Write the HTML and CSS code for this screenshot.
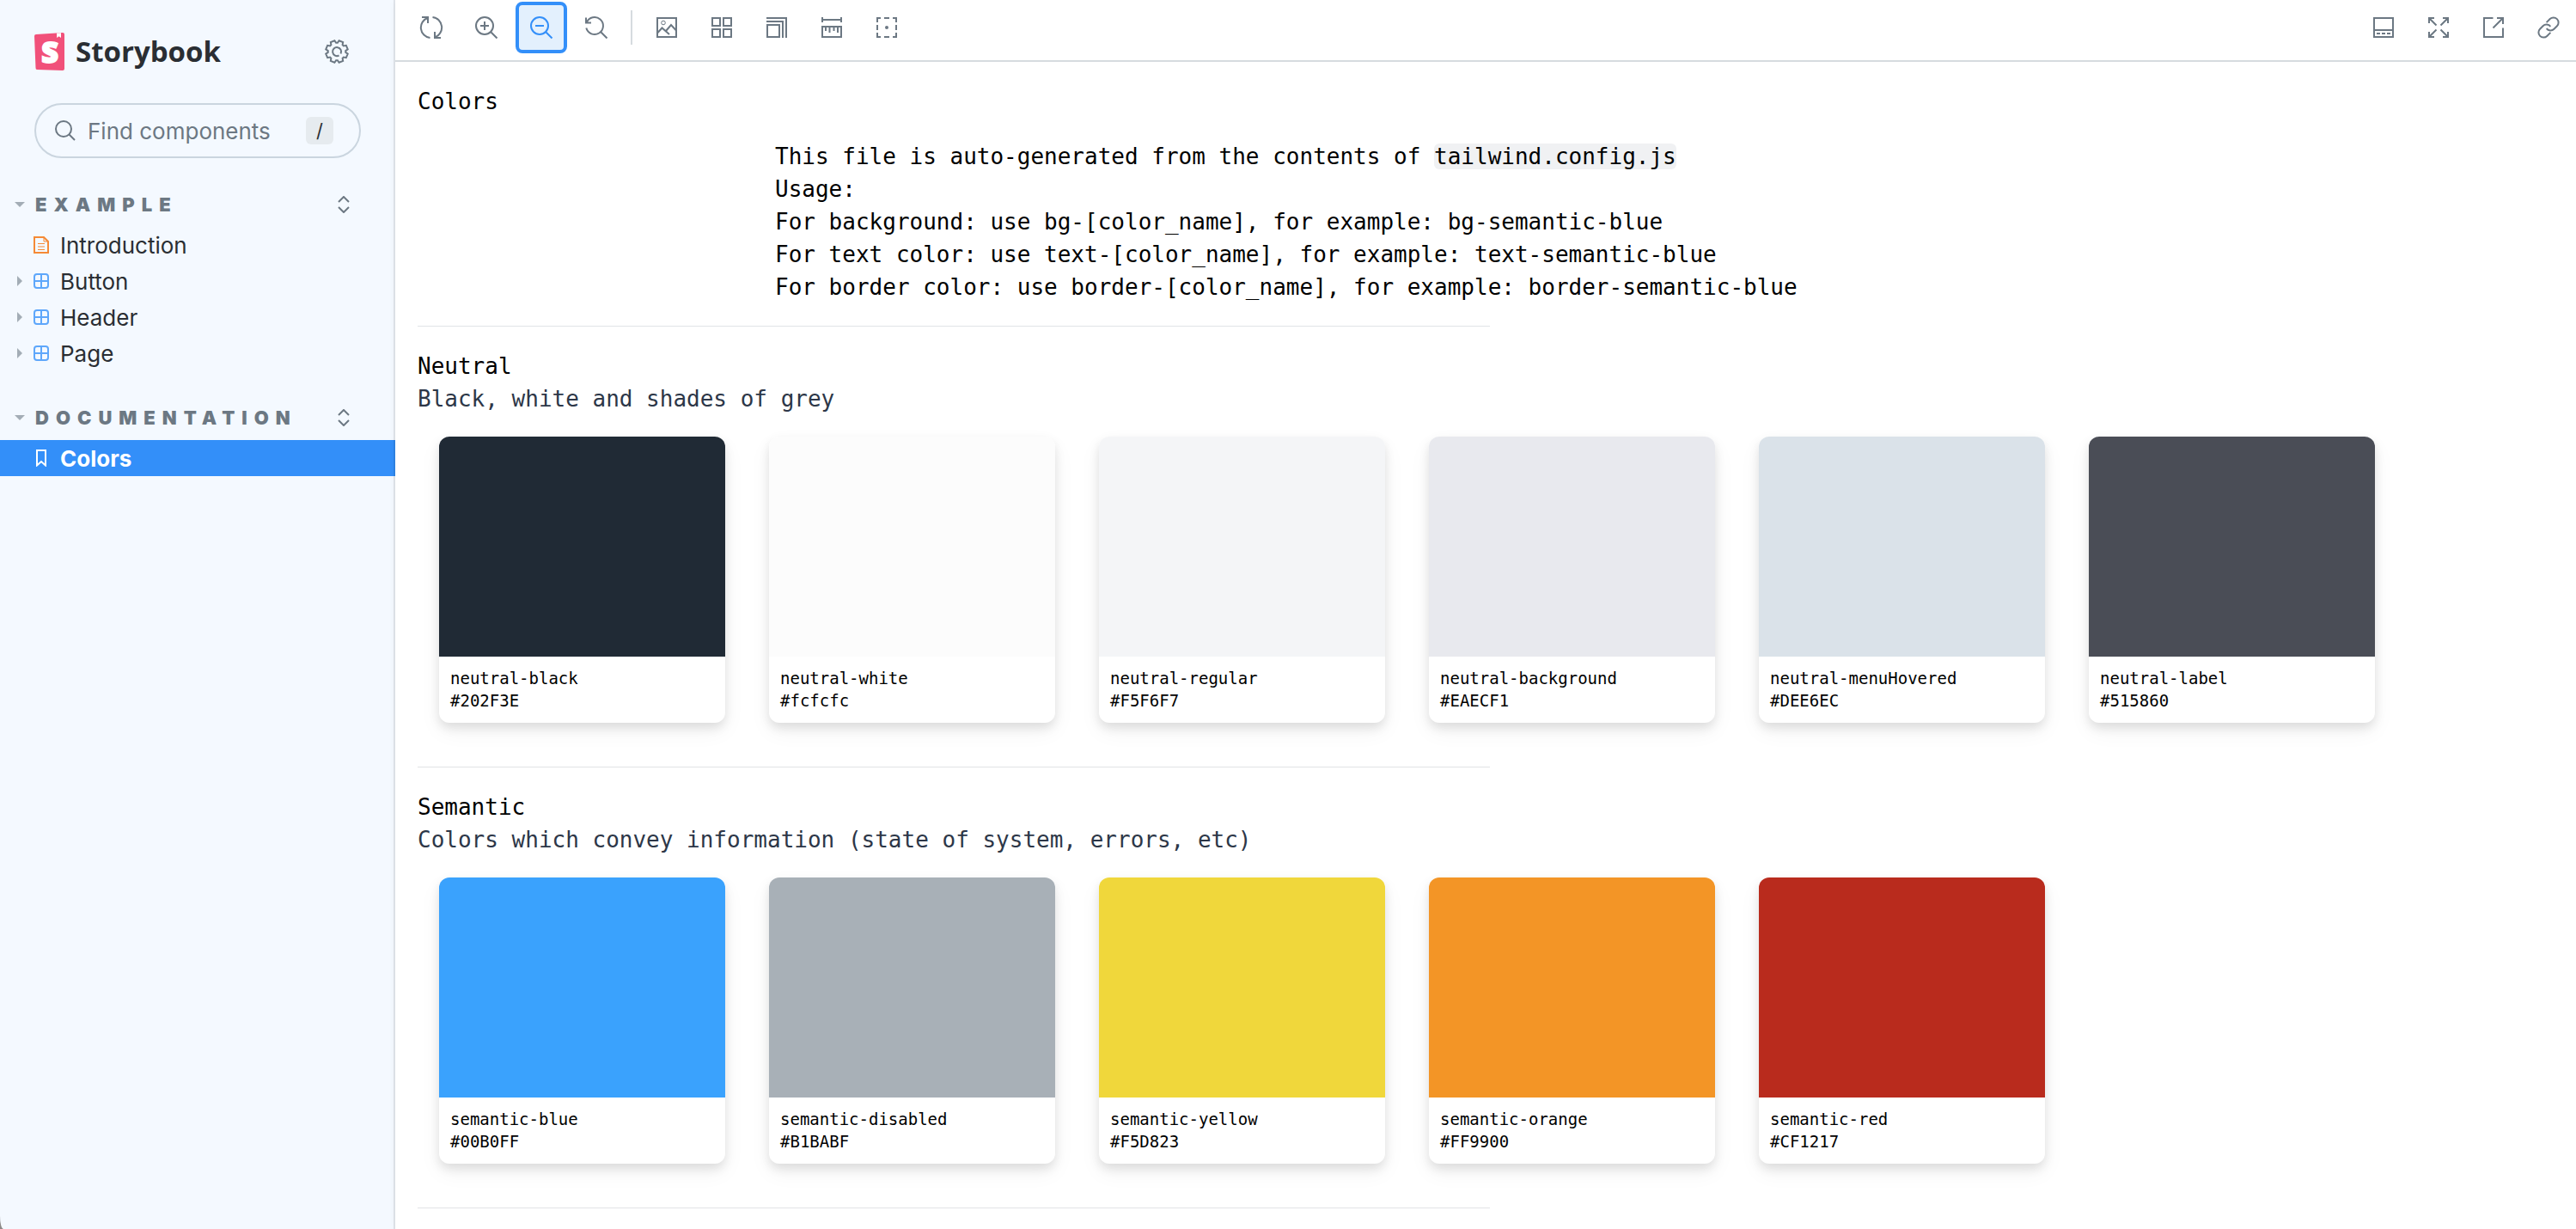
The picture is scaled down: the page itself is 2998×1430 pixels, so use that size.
FILE: index.html
```html
<!DOCTYPE html>
<html lang="en">
<head>
<meta charset="utf-8">
<title>Colors - Storybook</title>
<link rel="stylesheet" href="styles.css">
</head>
<body>
<svg class="sprite" aria-hidden="true">
  <symbol id="i-component" viewBox="0 0 18 18"><rect x="1" y="1" width="16" height="16" rx="3"/><path d="M9 1V17M1 9H17"/></symbol>
  <symbol id="i-expand" viewBox="0 0 14 20"><path d="M1 7L7 1L13 7M1 13L7 19L13 13"/></symbol>
</svg>
<div class="app">
  <aside class="sidebar">
    <header class="brand">
      <a class="brand-link" href="#">
        <svg class="logo" viewBox="0 0 35 44" aria-hidden="true">
          <path class="logo-cover" d="M2 2L33 0Q35 0 35 2V42Q35 44 33 44L3 43Q1.500 43 1.500 41L0 4Q0 2 2 2Z"/>
          <path class="logo-mark" d="M26 .5L31 .2V6L28.600 4.300L26.200 6Z"/>
          <text class="logo-letter" x="18" y="35" text-anchor="middle">S</text>
        </svg>
        <span class="wordmark">Storybook</span>
      </a>
      <button class="gear" type="button" aria-label="Settings">
        <svg class="icon" viewBox="-14 -14 28 28"><path d="M10.260 .9L12.740 2.590L10.840 7.180L7.890 6.620L6.620 7.890L7.180 10.840L2.590 12.740L.9 10.260H-.9L-2.590 12.740L-7.180 10.840L-6.620 7.890L-7.890 6.620L-10.840 7.180L-12.740 2.590L-10.260 .9V-.9L-12.740 -2.590L-10.840 -7.180L-7.890 -6.620L-6.620 -7.890L-7.180 -10.840L-2.590 -12.740L-.9 -10.260H.9L2.590 -12.740L7.180 -10.840L6.620 -7.890L7.890 -6.620L10.840 -7.180L12.740 -2.590L10.260 -.9Z"/><path d="M2.500 4.500A5 5 0 1 1 4.500 2.500"/></svg>
      </button>
    </header>
    <div class="search">
      <svg class="search-icon" viewBox="0 0 24 24" aria-hidden="true"><circle cx="10" cy="10" r="9"/><path d="M16.500 16.500L23 23"/></svg>
      <input class="search-input" type="search" placeholder="Find components" aria-label="Find components">
      <kbd class="key">/</kbd>
    </div>
    <nav>
      <section class="group">
        <div class="group-head">
          <button class="group-toggle" type="button"><span class="caret-down"></span>EXAMPLE</button>
          <button class="group-expand" type="button" aria-label="Expand all"><svg class="expand-icon"><use href="#i-expand"/></svg></button>
        </div>
        <ul class="tree">
          <li><a class="node" href="#"><span class="caret"></span><svg class="node-icon doc" viewBox="0 0 18 20"><path d="M1 1H12L17 6V19H1Z"/><path class="fine" d="M12 1V6H17M5 8.500H13M5 12H13M5 15.500H13"/></svg>Introduction</a></li>
          <li><a class="node" href="#"><span class="caret caret-right"></span><svg class="node-icon"><use href="#i-component"/></svg>Button</a></li>
          <li><a class="node" href="#"><span class="caret caret-right"></span><svg class="node-icon"><use href="#i-component"/></svg>Header</a></li>
          <li><a class="node" href="#"><span class="caret caret-right"></span><svg class="node-icon"><use href="#i-component"/></svg>Page</a></li>
        </ul>
      </section>
      <section class="group">
        <div class="group-head">
          <button class="group-toggle" type="button"><span class="caret-down"></span>DOCUMENTATION</button>
          <button class="group-expand" type="button" aria-label="Expand all"><svg class="expand-icon"><use href="#i-expand"/></svg></button>
        </div>
        <ul class="tree">
          <li><a class="node selected" href="#" aria-current="page"><span class="caret"></span><svg class="node-icon" viewBox="0 0 18 20"><path d="M4 1H14V18.500L9 14L4 18.500Z"/></svg>Colors</a></li>
        </ul>
      </section>
    </nav>
  </aside>

  <main class="main">
    <div class="toolbar">
      <button class="tool" type="button" aria-label="Remount component"><svg class="icon" viewBox="0 0 28 28"><path d="M10 2.700A12 12 0 0 0 12.500 26M3 2H10V9M18 25.300A12 12 0 0 0 15.500 2M25 26H18V19"/></svg></button>
      <button class="tool" type="button" aria-label="Zoom in"><svg class="icon" viewBox="0 0 28 28"><circle cx="12" cy="12" r="10"/><path d="M19.500 19.500L26.500 26.500M7 12H17M12 7V17"/></svg></button>
      <button class="tool active" type="button" aria-label="Zoom out"><svg class="icon" viewBox="0 0 28 28"><circle cx="12" cy="12" r="10"/><path d="M19.500 19.500L26.500 26.500M7 12H17"/></svg></button>
      <button class="tool" type="button" aria-label="Reset zoom"><svg class="icon" viewBox="0 0 28 28"><path d="M2.800 8A10 10 0 1 1 2.300 14.600M2 2.500V8.500H8M19.500 19.500L26.500 26.500"/></svg></button>
      <span class="separator"></span>
      <button class="tool" type="button" aria-label="Change background"><svg class="icon" viewBox="0 0 28 28"><rect x="3" y="3" width="22" height="22"/><circle class="fine" cx="10" cy="8.500" r="2.300"/><path d="M3 20.500L8.500 14.500L17 22M13 18L19 11L25 17.500"/></svg></button>
      <button class="tool" type="button" aria-label="Apply a grid"><svg class="icon" viewBox="0 0 28 28"><path d="M3 3H12V12H3ZM16 3H25V12H16ZM3 16H12V25H3ZM16 16H25V25H16Z"/></svg></button>
      <button class="tool" type="button" aria-label="Change viewport size"><svg class="icon" viewBox="0 0 28 28"><path d="M3 11H17V25H3ZM2 7H21V26M2 3H25V26"/></svg></button>
      <button class="tool" type="button" aria-label="Measure"><svg class="icon" viewBox="0 0 28 28"><path d="M3 2V8M25 2V8M3 5H25M3 13H25V25H3ZM7 13V18M11.500 13V20M16.500 13V18M21 13V20"/></svg></button>
      <button class="tool" type="button" aria-label="Apply outlines"><svg class="icon" viewBox="0 0 28 28"><path d="M3 8V3H7M11 3H17M21 3H25V8M25 11V17M25 20V25H21M17 25H11M7 25H3V20M3 17V11"/><circle class="dot" cx="14" cy="14" r="2"/></svg></button>
      <span class="spacer"></span>
      <button class="tool" type="button" aria-label="Show addons"><svg class="icon" viewBox="0 0 28 28"><path d="M3 3H25V25H3ZM3 17H25M6 21H10M12 21H16M18 21H22"/></svg></button>
      <button class="tool" type="button" aria-label="Go full screen"><svg class="icon" viewBox="0 0 28 28"><path d="M3 9V3H9M3 3L11.500 11.500M19 3H25V9M25 3L16.500 11.500M3 19V25H9M3 25L11.500 16.500M25 19V25H19M25 25L16.500 16.500"/></svg></button>
      <button class="tool" type="button" aria-label="Open canvas in new tab"><svg class="icon" viewBox="0 0 28 28"><path d="M13.500 3H3V25H25V14.500M18 3H25V10M25 3L13.500 14.500"/></svg></button>
      <button class="tool" type="button" aria-label="Copy canvas link"><svg class="icon link" viewBox="0 0 24 24"><path d="M10 13a5 5 0 0 0 7.540.540l3-3a5 5 0 0 0-7.070-7.070l-3.500 3.500"/><path d="M14 11a5 5 0 0 0-7.540-.540l-3 3a5 5 0 0 0 7.070 7.070l3.500-3.500"/></svg></button>
    </div>

    <article class="docs">
      <h1 class="title">Colors</h1>
      <div class="usage">
        <p>This file is auto-generated from the contents of <code class="file">tailwind.config.js</code></p>
        <p>Usage:</p>
        <p>For background: use bg-[color_name], for example: bg-semantic-blue</p>
        <p>For text color: use text-[color_name], for example: text-semantic-blue</p>
        <p>For border color: use border-[color_name], for example: border-semantic-blue</p>
      </div>
      <hr class="rule">
      <section class="palette">
        <h2 class="title">Neutral</h2>
        <p class="about">Black, white and shades of grey</p>
        <div class="cards">
          <figure class="card"><div class="swatch neutral-black"></div><figcaption>neutral-black<br>#202F3E</figcaption></figure>
          <figure class="card"><div class="swatch neutral-white"></div><figcaption>neutral-white<br>#fcfcfc</figcaption></figure>
          <figure class="card"><div class="swatch neutral-regular"></div><figcaption>neutral-regular<br>#F5F6F7</figcaption></figure>
          <figure class="card"><div class="swatch neutral-background"></div><figcaption>neutral-background<br>#EAECF1</figcaption></figure>
          <figure class="card"><div class="swatch neutral-hovered"></div><figcaption>neutral-menuHovered<br>#DEE6EC</figcaption></figure>
          <figure class="card"><div class="swatch neutral-label"></div><figcaption>neutral-label<br>#515860</figcaption></figure>
        </div>
      </section>
      <hr class="rule">
      <section class="palette">
        <h2 class="title">Semantic</h2>
        <p class="about">Colors which convey information (state of system, errors, etc)</p>
        <div class="cards">
          <figure class="card"><div class="swatch semantic-blue"></div><figcaption>semantic-blue<br>#00B0FF</figcaption></figure>
          <figure class="card"><div class="swatch semantic-disabled"></div><figcaption>semantic-disabled<br>#B1BABF</figcaption></figure>
          <figure class="card"><div class="swatch semantic-yellow"></div><figcaption>semantic-yellow<br>#F5D823</figcaption></figure>
          <figure class="card"><div class="swatch semantic-orange"></div><figcaption>semantic-orange<br>#FF9900</figcaption></figure>
          <figure class="card"><div class="swatch semantic-red"></div><figcaption>semantic-red<br>#CF1217</figcaption></figure>
        </div>
      </section>
      <hr class="rule">
    </article>
  </main>
</div>
</body>
</html>
```
FILE: styles.css
```css
* { box-sizing: border-box; }

body {
  margin: 0;
  background: #8c8a88;
  font-family: Inter, "Liberation Sans", sans-serif;
  font-size: 26px;
  color: #2a2e33;
}

h1, h2, p, figure, ul { margin: 0; padding: 0; }
ul { list-style: none; }
a { color: inherit; text-decoration: none; }

button {
  margin: 0;
  padding: 0;
  border: 0;
  background: none;
  font: inherit;
  color: inherit;
  cursor: pointer;
}

svg { fill: none; stroke: currentColor; stroke-width: 2; flex: none; }
.sprite { display: none; }

.app { display: flex; min-height: 100vh; }

/* Sidebar */
.sidebar {
  flex: 0 0 460px;
  min-width: 0;
  padding-top: 36px;
  background: #f4f9ff;
  border-bottom-left-radius: 4px 15px;
}

.brand {
  display: flex;
  align-items: center;
  justify-content: space-between;
  height: 48px;
  padding: 0 54px 0 40px;
}
.brand-link { display: flex; align-items: center; gap: 13px; }
.logo { width: 35px; height: 44px; stroke: none; }
.logo-cover { fill: #f1517a; }
.logo-mark { fill: #fff; }
.logo-letter {
  fill: #fff;
  stroke: #fff;
  stroke-width: 2;
  font: 800 34px "Open Sans", sans-serif;
}
.wordmark { font: 700 33px/48px "Open Sans", sans-serif; }
.gear { display: flex; color: #6c7883; }
.icon { width: 28px; height: 28px; }
.fine { stroke-width: 1; }
.dot { fill: currentColor; stroke: none; }
.link { stroke-width: 1.700; }

.search {
  display: flex;
  align-items: center;
  height: 64px;
  margin: 36px 40px 0;
  padding: 0 30px 0 22px;
  border: 2px solid #cad5df;
  border-radius: 32px;
  color: #6c7883;
}
.search-icon { width: 24px; height: 24px; }
.search-input {
  flex: 1;
  min-width: 0;
  width: 100%;
  margin: 0;
  padding: 0 0 0 14px;
  border: 0;
  outline: 0;
  background: none;
  font: inherit;
}
.search-input::placeholder { color: #6c7883; opacity: 1; }
.key {
  flex: none;
  width: 32px;
  height: 32px;
  border-radius: 6px;
  background: #e6ebef;
  font: 22px/32px Inter, sans-serif;
  text-align: center;
  color: #2a2e33;
}

.group { margin-top: 36px; }
.group-head {
  display: flex;
  justify-content: space-between;
  height: 36px;
  margin-bottom: 8px;
  padding: 0 53px 0 17px;
  color: #6c7883;
}
.group-toggle {
  display: flex;
  align-items: center;
  gap: 12px;
  font-size: 22px;
  font-weight: 900;
  letter-spacing: 8px;
}
.caret-down { border: 6px solid transparent; border-top-color: #a3adb6; border-bottom: 0; }
.group-expand { display: flex; align-items: center; }
.expand-icon { width: 14px; height: 20px; }

.node { display: flex; align-items: center; height: 42px; padding-left: 20px; }
.node-icon { width: 18px; height: 20px; margin-right: 13px; color: #5ea7fb; }
.doc { color: #f58a36; }
.caret { width: 6px; margin-right: 13px; }
.caret-right { border: 6px solid transparent; border-left-color: #a3adb6; border-right: 0; }
.selected { background: #338ff9; color: #fff; font-weight: 700; }
.selected .node-icon { color: #fff; }

/* Canvas */
.main {
  position: relative;
  flex: 1;
  min-width: 0;
  background: #fff;
  box-shadow: -2px 0 0 rgba(0, 0, 0, 0.08), 0 2px 8px rgba(0, 0, 0, 0.06);
}

.toolbar {
  display: flex;
  align-items: center;
  gap: 4px;
  padding: 2px 2px 8px 12px;
  border-bottom: 2px solid #d6dbdf;
  color: #6c7883;
}
.tool {
  display: flex;
  align-items: center;
  justify-content: center;
  width: 60px;
  height: 60px;
  border-radius: 8px;
}
.tool.active { border: 4px solid #338ff9; background: #e3f0fd; color: #338ff9; }
.separator { width: 2px; height: 40px; margin: 0 6px; background: #d6dbdf; }
.spacer { flex: 1; }

.docs {
  padding: 27px 26px 24px;
  font: 26px/38px "DejaVu Sans Mono", monospace;
  color: #000;
}
.title { font: inherit; }
.usage {
  max-width: 1248px;
  margin: 26px 0;
  padding-left: 416px;
  white-space: nowrap;
}
.file {
  border-radius: 6px;
  background: #f0f1f3;
  font: inherit;
}
.rule { width: 1248px; max-width: 100%; height: 1px; margin: 0; border: 0; background: #e1e3e6; }

.palette { padding: 27px 0 51px; }
.about { color: #2d3748; }
.cards { display: flex; flex-wrap: wrap; gap: 51px; padding: 25px 0 0 25px; }
.card {
  width: 333px;
  overflow: hidden;
  border-radius: 12px;
  box-shadow: 0 6px 12px rgba(0, 0, 0, 0.1), 0 10px 26px rgba(0, 0, 0, 0.05);
}
.swatch { height: 256px; }
.card figcaption { padding: 12px 13px 13px; font-size: 19px; line-height: 26px; }

.neutral-black { background: #202a35; }
.neutral-white { background: #fcfcfc; }
.neutral-regular { background: #f4f5f7; }
.neutral-background { background: #e8e9ee; }
.neutral-hovered { background: #dae2e9; }
.neutral-label { background: #4a4d56; }
.semantic-blue { background: #3aa2fd; }
.semantic-disabled { background: #a8b0b7; }
.semantic-yellow { background: #f0d73b; }
.semantic-orange { background: #f39526; }
.semantic-red { background: #b92b1d; }
```
